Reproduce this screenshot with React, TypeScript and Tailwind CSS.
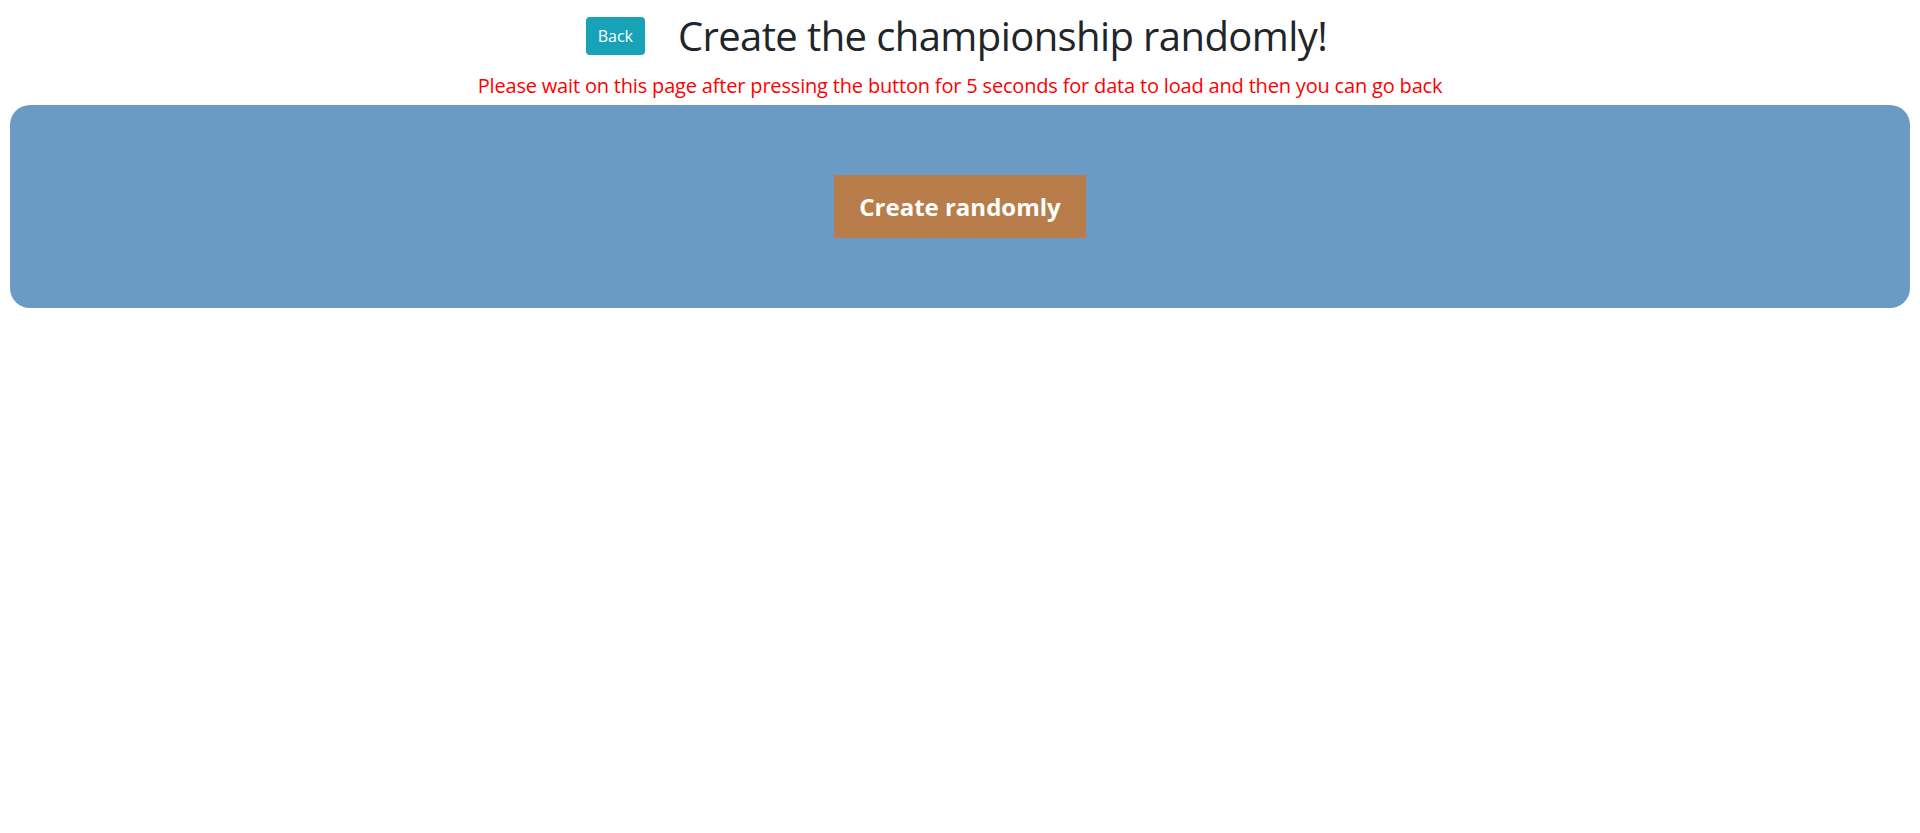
import React from "react";

export default function App() {
  return (
    <div className="min-h-screen bg-white" style={{ fontFamily: '"Open Sans", "Noto Sans", sans-serif' }}>
      <div className="flex items-center justify-center gap-[33px] pt-[12px] pr-[7px]">
        <button className="h-[38px] w-[59px] rounded-[4px] bg-[#17a2b8] text-[16px] leading-none text-white">
          Back
        </button>
        <h1 className="text-[40px] font-medium leading-[48px] tracking-[-0.015em] text-[#212529]">
          Create the championship randomly!
        </h1>
      </div>
      <p className="mt-[14px] text-center text-[20px] font-medium leading-[24px] tracking-[-0.009em] text-[#ff0000]">
        Please wait on this page after pressing the button for 5 seconds for data to load and then you can go back
      </p>
      <div className="mx-[10px] mt-[7px] flex justify-center rounded-[20px] bg-[#6b9bc4] py-[70px]">
        <button className="h-[63px] w-[252px] bg-[#b87d4b] text-[24px] font-bold text-white">
          Create randomly
        </button>
      </div>
    </div>
  );
}
